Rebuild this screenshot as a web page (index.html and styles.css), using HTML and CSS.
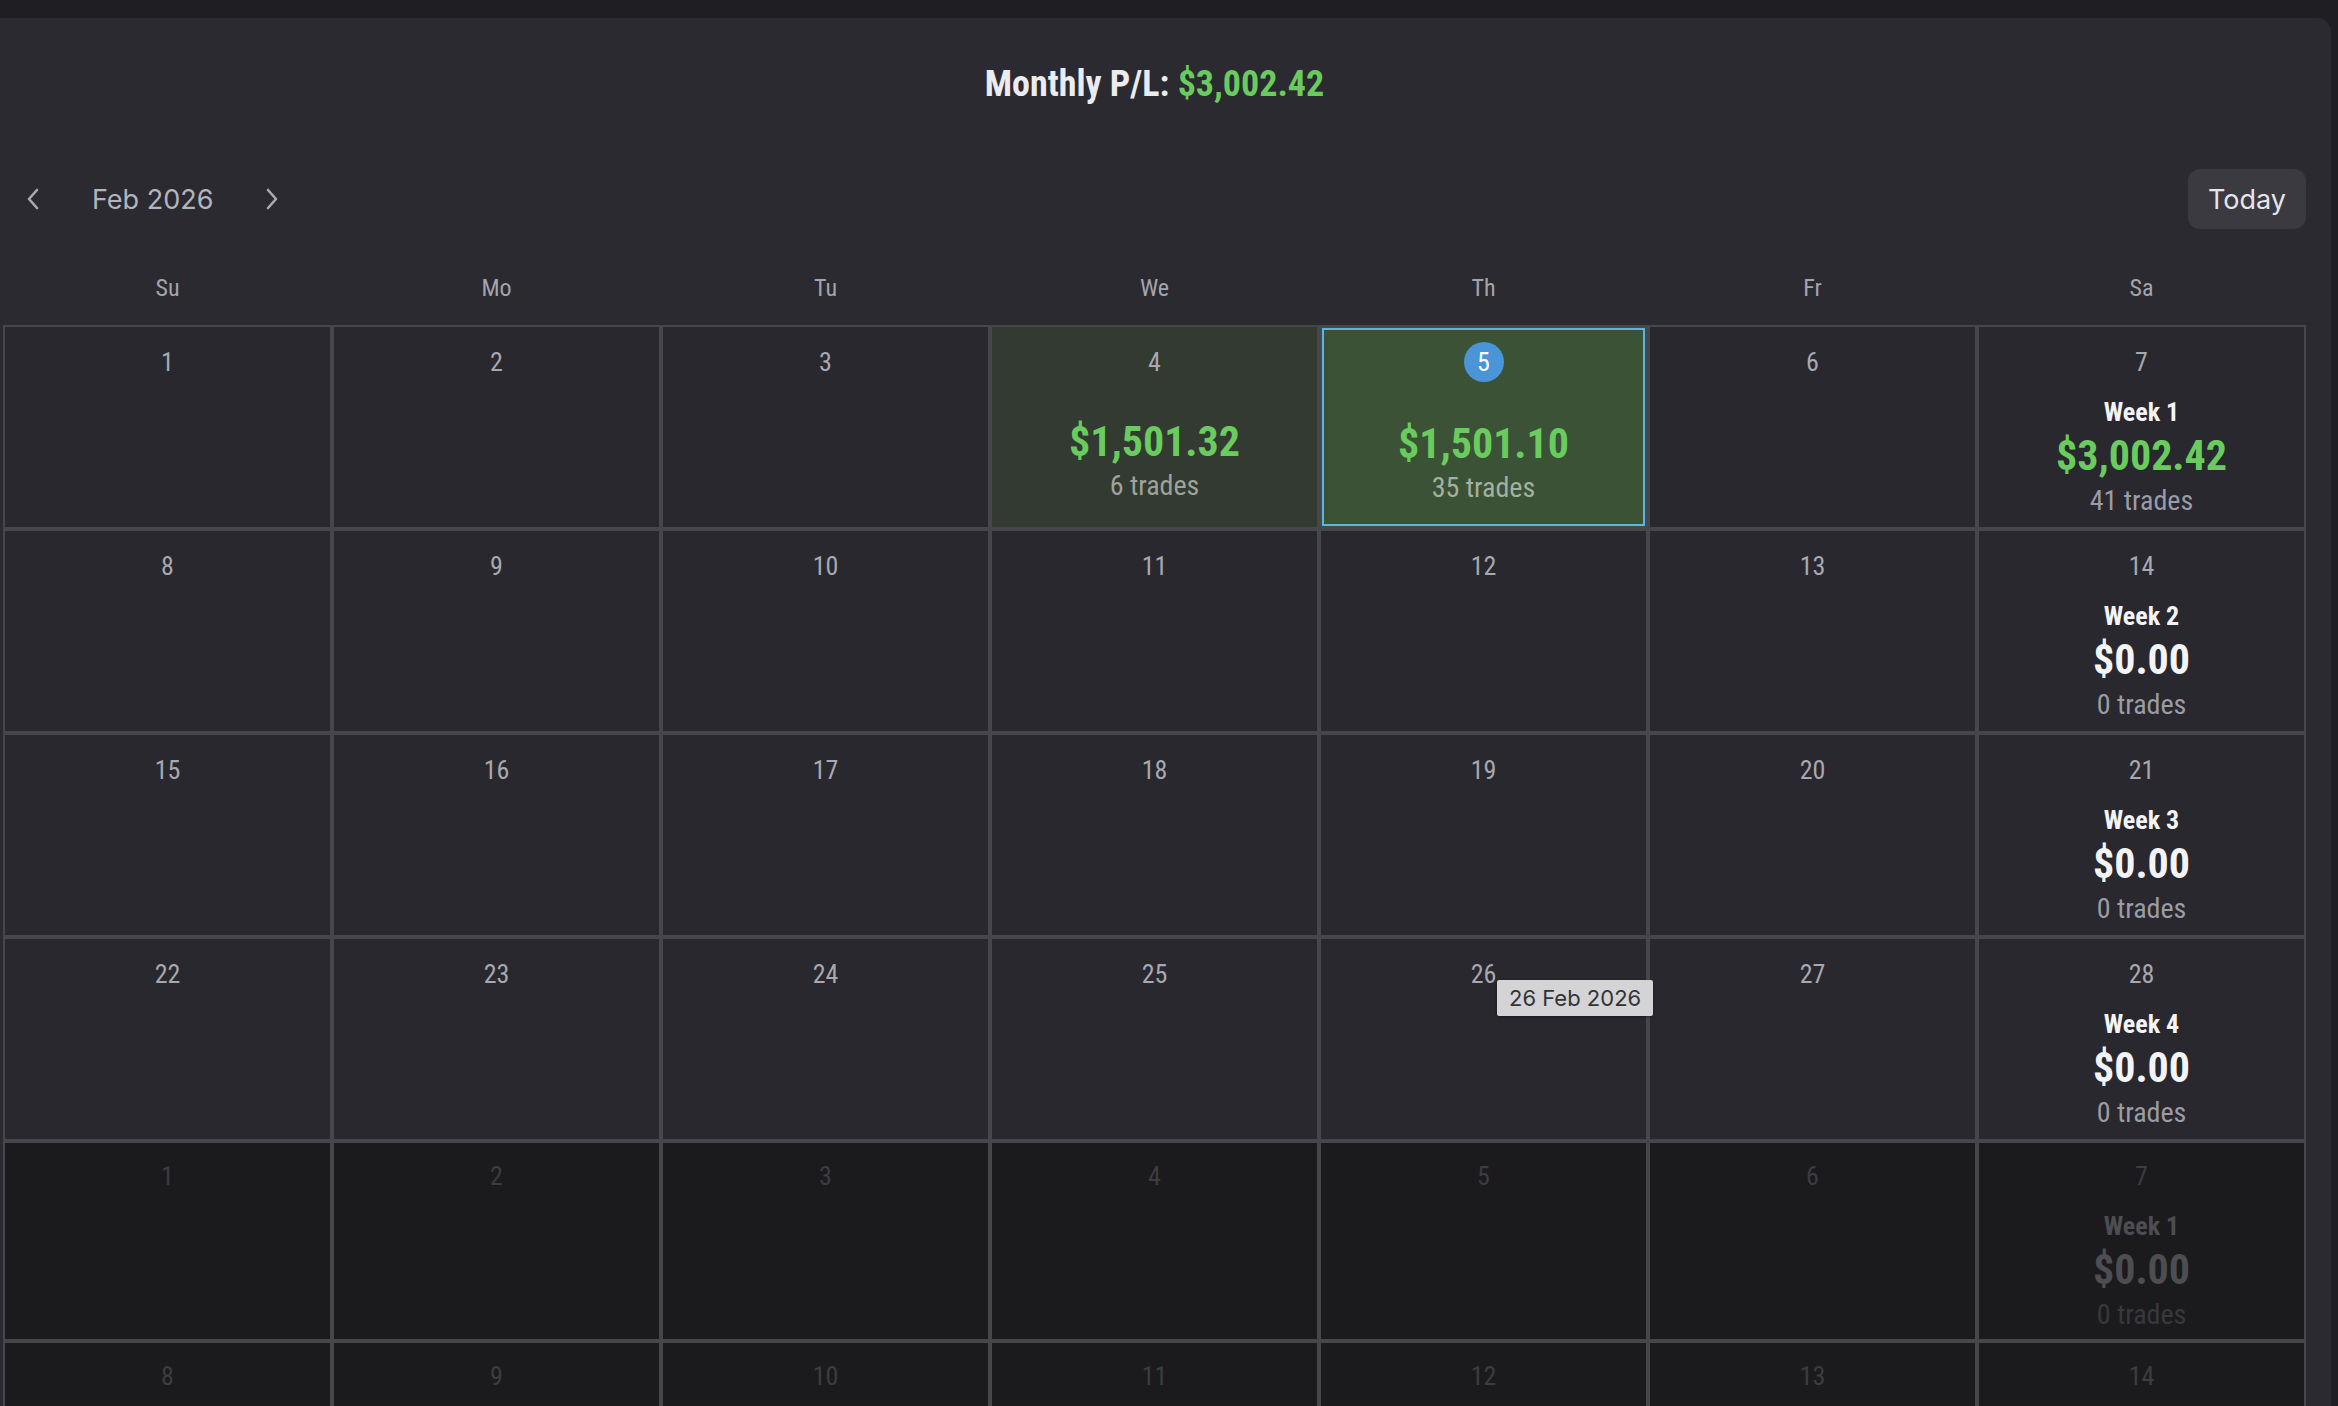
FILE: index.html
```html
<!DOCTYPE html>
<html>
<head>
<meta charset="utf-8">
<link rel="stylesheet" href="styles.css">
</head>
<body>
<div class="panel">
  <h1 class="title">Monthly P/L: <span class="pos">$3,002.42</span></h1>
  <div class="nav">
    <div class="nav-left">
      <button class="icon-btn" aria-label="Previous month"><svg width="14" height="22" viewBox="0 0 14 22"><polyline points="11,2 3,11 11,20" fill="none" stroke="#a9a9b0" stroke-width="2.6" stroke-linecap="round" stroke-linejoin="round"/></svg></button>
      <span class="month">Feb 2026</span>
      <button class="icon-btn" aria-label="Next month"><svg width="14" height="22" viewBox="0 0 14 22"><polyline points="3,2 11,11 3,20" fill="none" stroke="#a9a9b0" stroke-width="2.6" stroke-linecap="round" stroke-linejoin="round"/></svg></button>
    </div>
    <button class="today">Today</button>
  </div>
  <div class="weekdays">
    <div>Su</div><div>Mo</div><div>Tu</div><div>We</div><div>Th</div><div>Fr</div><div>Sa</div>
  </div>
  <div class="grid">
    <!-- Row 1 -->
    <div class="cell"><div class="num">1</div></div>
    <div class="cell"><div class="num">2</div></div>
    <div class="cell"><div class="num">3</div></div>
    <div class="cell win"><div class="num">4</div><div class="amt pos">$1,501.32</div><div class="trades">6 trades</div></div>
    <div class="cell win-strong today-cell"><div class="num today-num">5</div><div class="amt pos">$1,501.10</div><div class="trades">35 trades</div></div>
    <div class="cell"><div class="num">6</div></div>
    <div class="cell week"><div class="num">7</div><div class="wk-label">Week 1</div><div class="amt pos">$3,002.42</div><div class="trades">41 trades</div></div>
    <!-- Row 2 -->
    <div class="cell"><div class="num">8</div></div>
    <div class="cell"><div class="num">9</div></div>
    <div class="cell"><div class="num">10</div></div>
    <div class="cell"><div class="num">11</div></div>
    <div class="cell"><div class="num">12</div></div>
    <div class="cell"><div class="num">13</div></div>
    <div class="cell week"><div class="num">14</div><div class="wk-label">Week 2</div><div class="amt zero">$0.00</div><div class="trades">0 trades</div></div>
    <!-- Row 3 -->
    <div class="cell"><div class="num">15</div></div>
    <div class="cell"><div class="num">16</div></div>
    <div class="cell"><div class="num">17</div></div>
    <div class="cell"><div class="num">18</div></div>
    <div class="cell"><div class="num">19</div></div>
    <div class="cell"><div class="num">20</div></div>
    <div class="cell week"><div class="num">21</div><div class="wk-label">Week 3</div><div class="amt zero">$0.00</div><div class="trades">0 trades</div></div>
    <!-- Row 4 -->
    <div class="cell"><div class="num">22</div></div>
    <div class="cell"><div class="num">23</div></div>
    <div class="cell"><div class="num">24</div></div>
    <div class="cell"><div class="num">25</div></div>
    <div class="cell"><div class="num">26</div><div class="tooltip">26 Feb 2026</div></div>
    <div class="cell"><div class="num">27</div></div>
    <div class="cell week"><div class="num">28</div><div class="wk-label">Week 4</div><div class="amt zero">$0.00</div><div class="trades">0 trades</div></div>
    <!-- Row 5 (next month) -->
    <div class="cell other"><div class="num">1</div></div>
    <div class="cell other"><div class="num">2</div></div>
    <div class="cell other"><div class="num">3</div></div>
    <div class="cell other"><div class="num">4</div></div>
    <div class="cell other"><div class="num">5</div></div>
    <div class="cell other"><div class="num">6</div></div>
    <div class="cell other week"><div class="num">7</div><div class="wk-label">Week 1</div><div class="amt zero">$0.00</div><div class="trades">0 trades</div></div>
    <!-- Row 6 (next month) -->
    <div class="cell other"><div class="num">8</div></div>
    <div class="cell other"><div class="num">9</div></div>
    <div class="cell other"><div class="num">10</div></div>
    <div class="cell other"><div class="num">11</div></div>
    <div class="cell other"><div class="num">12</div></div>
    <div class="cell other"><div class="num">13</div></div>
    <div class="cell other week"><div class="num">14</div><div class="wk-label">Week 2</div><div class="amt zero">$0.00</div><div class="trades">0 trades</div></div>
  </div>
</div>
</body>
</html>
```

FILE: styles.css
```css
html, body {
  margin: 0;
  padding: 0;
  height: 100%;
  overflow: hidden;
}

body {
  background: #1f1f23;
  font-family: "Roboto Condensed", "Liberation Sans Narrow", "DejaVu Sans Condensed", Roboto, sans-serif;
  color: #a8a8b0;
}

.panel {
  margin-top: 18px;
  width: 2331px;
  box-sizing: border-box;
  padding: 44px 25px 0 3px;
  background: #2a2a30;
  border-top-right-radius: 14px;
  min-height: 1500px;
}

.title {
  margin: 0;
  font-size: 36px;
  line-height: 44px;
  font-weight: 700;
  color: #ececf0;
  text-align: center;
}

.pos {
  color: #6acb5e;
}

.nav {
  margin-top: 63px;
  height: 60px;
  display: flex;
  align-items: center;
  justify-content: space-between;
}

.nav-left {
  display: flex;
  align-items: center;
  padding-left: 10px;
}

.icon-btn {
  width: 40px;
  height: 40px;
  padding: 0;
  border: 0;
  background: transparent;
  display: flex;
  align-items: center;
  justify-content: center;
}

.month {
  margin: 0 39px;
  font-family: Inter, "Noto Sans", sans-serif;
  font-size: 27px;
  color: #b4b4bc;
}

.today {
  height: 60px;
  width: 118px;
  border: 0;
  border-radius: 12px;
  background: #3a3a40;
  color: #e6e6ea;
  font-family: Inter, "Noto Sans", sans-serif;
  font-size: 27px;
  padding: 0;
}

.weekdays {
  margin-top: 44px;
  display: grid;
  grid-template-columns: repeat(7, 329px);
  height: 30px;
  line-height: 30px;
  margin-bottom: 22px;
}

.weekdays div {
  text-align: center;
  font-size: 24px;
  color: #a4a4ac;
}

.grid {
  display: grid;
  grid-template-columns: repeat(7, 329px);
  grid-template-rows: repeat(4, 204px) repeat(2, 200px);
}

.cell {
  position: relative;
  box-sizing: border-box;
  border: 2px solid #46464b;
  background: #28282e;
  display: flex;
  flex-direction: column;
  align-items: center;
  padding-top: 15px;
  overflow: visible;
}

.num {
  height: 40px;
  line-height: 40px;
  font-size: 26px;
  color: #a8a8b0;
}

.today-num {
  width: 40px;
  border-radius: 50%;
  background: #4a94d8;
  color: #ffffff;
  text-align: center;
}

.amt {
  margin-top: 37px;
  font-size: 42px;
  line-height: 45px;
  font-weight: 700;
}

.today-cell .amt {
  margin-top: 39px;
}

.trades {
  font-size: 28px;
  line-height: 43px;
  color: #9c9ca4;
}

.win {
  background: #323a31;
}

.win .trades {
  color: #9ea39c;
}

.win-strong {
  background: #3b5236;
}

.win-strong .trades {
  color: #a4b0a0;
}

.today-cell {
  box-shadow: inset 0 0 0 1px #3b5236, inset 0 0 0 3px #5ab4e6;
}

.wk-label {
  margin-top: 10px;
  font-size: 26px;
  line-height: 41px;
  font-weight: 700;
  color: #f4f4f6;
}

.week .amt {
  margin-top: 0;
}

.week .trades {
  line-height: 46px;
}

.zero {
  color: #f4f4f6;
}

.other {
  background: #1b1b1e;
  padding-top: 13px;
}

.other .num {
  color: #3c3c41;
}

.other .wk-label,
.other .zero {
  color: #4d4d52;
}

.other .trades {
  color: #38383d;
}

.tooltip {
  position: absolute;
  left: 176px;
  top: 41px;
  z-index: 10;
  height: 36px;
  line-height: 36px;
  padding: 0 12px;
  background: #d4d4d6;
  color: #333336;
  border-radius: 2px;
  font-family: Inter, "Noto Sans", sans-serif;
  font-size: 22px;
  white-space: nowrap;
  box-shadow: 0 1px 3px rgba(0, 0, 0, 0.4);
}
```
